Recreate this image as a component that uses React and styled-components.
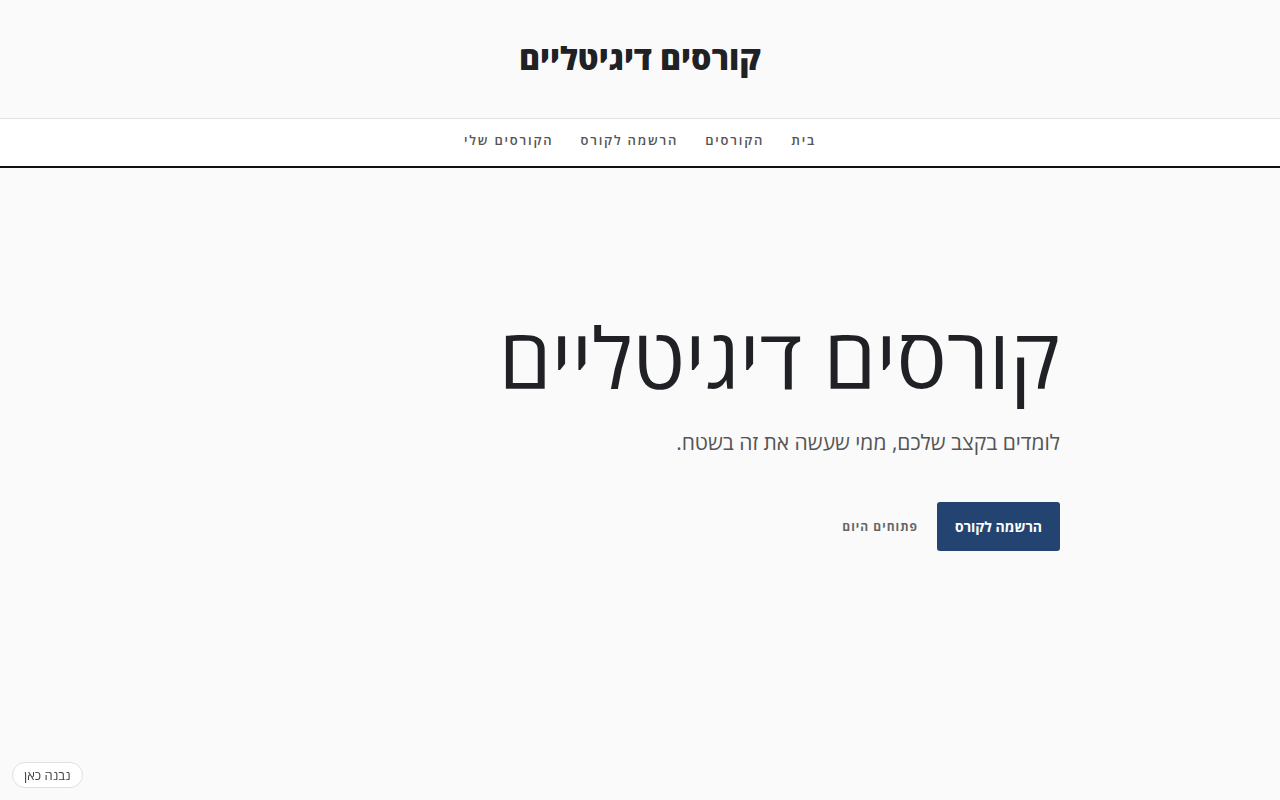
import styled, { createGlobalStyle } from "styled-components";

const GlobalStyle = createGlobalStyle`
  html, body {
    margin: 0;
    padding: 0;
    background: #fafafa;
    font-family: "Open Sans", "DejaVu Sans", sans-serif;
    color: #1f2124;
  }
  * { box-sizing: border-box; }
`;

const Page = styled.div`
  direction: rtl;
  min-height: 800px;
  display: flex;
  flex-direction: column;
`;

const Masthead = styled.header`
  height: 119px;
  display: flex;
  align-items: center;
  justify-content: center;
  border-bottom: 1px solid #e2e2e2;
`;

const SiteTitle = styled.h1`
  margin: 0;
  font-size: 32px;
  font-weight: 800;
  color: #1f2124;
  padding-bottom: 4px;
`;

const NavBar = styled.nav`
  height: 49px;
  padding-bottom: 5px;
  background: #fff;
  border-bottom: 2px solid #111;
  display: flex;
  align-items: center;
  justify-content: center;
  gap: 27px;
`;

const NavLink = styled.a`
  font-size: 13px;
  font-weight: 600;
  letter-spacing: 1.8px;
  color: #555;
  text-decoration: none;
`;

const Hero = styled.main`
  flex: 1;
  display: flex;
  justify-content: center;
  padding-top: 139px;
`;

const HeroInner = styled.div`
  width: 840px;
  display: flex;
  flex-direction: column;
  align-items: flex-start;
`;

const HeroTitle = styled.h2`
  margin: 0;
  font-size: 84px;
  font-weight: 400;
  line-height: 1.2;
  color: #1f2124;
`;

const Lead = styled.p`
  margin: 20px 0 0;
  font-size: 21px;
  font-weight: 400;
  color: #555;
`;

const Actions = styled.div`
  display: flex;
  align-items: center;
  gap: 19px;
  margin-top: 46px;
`;

const PrimaryButton = styled.a`
  display: inline-flex;
  align-items: center;
  justify-content: center;
  height: 49px;
  padding: 0 18px;
  background: #234470;
  color: #fff;
  font-size: 14px;
  font-weight: 700;
  border-radius: 3px;
  text-decoration: none;
`;

const TextLink = styled.a`
  font-size: 12px;
  font-weight: 700;
  letter-spacing: 1px;
  color: #666;
  text-decoration: none;
`;

const Badge = styled.div`
  position: fixed;
  left: 12px;
  bottom: 12px;
  height: 26px;
  padding: 0 11px;
  display: flex;
  align-items: center;
  border: 1px solid #e0e0e0;
  border-radius: 13px;
  background: #fff;
  font-size: 13px;
  color: #444;
  direction: rtl;
`;

export default function App() {
  return (
    <>
      <GlobalStyle />
      <Page>
        <Masthead>
          <SiteTitle>קורסים דיגיטליים</SiteTitle>
        </Masthead>
        <NavBar>
          <NavLink href="#">בית</NavLink>
          <NavLink href="#">הקורסים</NavLink>
          <NavLink href="#">הרשמה לקורס</NavLink>
          <NavLink href="#">הקורסים שלי</NavLink>
        </NavBar>
        <Hero>
          <HeroInner>
            <HeroTitle>קורסים דיגיטליים</HeroTitle>
            <Lead>לומדים בקצב שלכם, ממי שעשה את זה בשטח.</Lead>
            <Actions>
              <PrimaryButton href="#">הרשמה לקורס</PrimaryButton>
              <TextLink href="#">פתוחים היום</TextLink>
            </Actions>
          </HeroInner>
        </Hero>
      </Page>
      <Badge>נבנה כאן</Badge>
    </>
  );
}
